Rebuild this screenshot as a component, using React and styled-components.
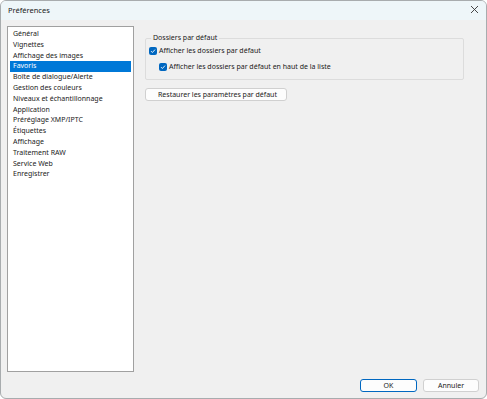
import styled, { createGlobalStyle } from "styled-components";

const GlobalStyle = createGlobalStyle`
  html, body {
    margin: 0;
    padding: 0;
    background: #ffffff;
  }
  body {
    font-family: "Noto Sans", "Open Sans", sans-serif;
    font-size: 7px;
    color: #1a1a1a;
  }
`;

const Window = styled.div`
  width: 487px;
  height: 399px;
  box-sizing: border-box;
  border: 1px solid #a8acae;
  border-radius: 6px;
  overflow: hidden;
  background: #f0f0f0;
  display: flex;
  flex-direction: column;
`;

const TitleBar = styled.div`
  height: 19px;
  flex: none;
  box-sizing: border-box;
  background: #eef6f9;
  display: flex;
  align-items: center;
  justify-content: space-between;
  padding: 0 7px 2px 7px;
`;

const Title = styled.span`
  font-size: 7.5px;
  color: #1a1a1a;
`;

const CloseButton = styled.div`
  width: 10px;
  height: 10px;
  display: flex;
  align-items: center;
  justify-content: center;
`;

const Body = styled.div`
  flex: 1;
  display: flex;
  flex-direction: column;
  padding: 6px 6px 6px 6px;
`;

const Main = styled.div`
  flex: 1;
  display: flex;
  gap: 11px;
`;

const List = styled.div`
  width: 127px;
  height: 346px;
  box-sizing: border-box;
  background: #ffffff;
  border: 1px solid #a0a0a0;
  padding: 2px 2px 0 2px;
  display: flex;
  flex-direction: column;
`;

const ListItem = styled.div`
  height: 10.8px;
  line-height: 10.8px;
  padding-left: 3px;
  white-space: nowrap;
  background: ${(p) => (p.selected ? "#0078d7" : "transparent")};
  color: ${(p) => (p.selected ? "#ffffff" : "#1a1a1a")};
`;

const Panel = styled.div`
  flex: 1;
  display: flex;
  flex-direction: column;
  align-items: flex-start;
  padding-top: 8px;
  padding-right: 16px;
`;

const Group = styled.fieldset`
  align-self: stretch;
  margin: 0;
  padding: 3px 4px 7px 3px;
  border: 1px solid #dcdcdc;
  border-radius: 2px;
  display: flex;
  flex-direction: column;
  gap: 5px;
`;

const Legend = styled.legend`
  padding: 0 2px;
  margin-left: 2px;
  font-size: 7px;
  line-height: 8px;
`;

const CheckRow = styled.label`
  display: flex;
  align-items: center;
  gap: 2px;
  padding-left: ${(p) => (p.indent ? "10px" : "0")};
  line-height: 11px;
`;

const Box = styled.span`
  width: 8px;
  height: 8px;
  border-radius: 2px;
  background: #0067c0;
  display: flex;
  align-items: center;
  justify-content: center;
  flex: none;
`;

const Button = styled.button`
  font-family: inherit;
  font-size: 7px;
  color: #1a1a1a;
  height: 13px;
  padding: 0;
  box-sizing: border-box;
  background: #fdfdfd;
  border: 1px solid ${(p) => (p.primary ? "#0067c0" : "#d0d0d0")};
  border-radius: 3px;
  width: ${(p) => p.w}px;
  line-height: 11px;
`;

const RestoreButton = styled(Button)`
  margin-top: 8px;
  text-align: left;
  padding-left: 12px;
`;

const Footer = styled.div`
  display: flex;
  justify-content: flex-end;
  gap: 6px;
  padding: 0 1px 0 0;
`;

const items = [
  "Général",
  "Vignettes",
  "Affichage des images",
  "Favoris",
  "Boîte de dialogue/Alerte",
  "Gestion des couleurs",
  "Niveaux et échantillonnage",
  "Application",
  "Préréglage XMP/IPTC",
  "Étiquettes",
  "Affichage",
  "Traitement RAW",
  "Service Web",
  "Enregistrer",
];

function Check() {
  return (
    <Box>
      <svg width="6" height="6" viewBox="0 0 6 6">
        <path d="M1 3.1 L2.4 4.5 L5 1.6" fill="none" stroke="#fff" strokeWidth="0.9" />
      </svg>
    </Box>
  );
}

export default function App() {
  return (
    <>
      <GlobalStyle />
      <Window>
        <TitleBar>
          <Title>Préférences</Title>
          <CloseButton>
            <svg width="9" height="9" viewBox="0 0 9 9">
              <path d="M1 1 L8 8 M8 1 L1 8" stroke="#333" strokeWidth="0.9" />
            </svg>
          </CloseButton>
        </TitleBar>
        <Body>
          <Main>
            <List>
              {items.map((it) => (
                <ListItem key={it} selected={it === "Favoris"}>
                  {it}
                </ListItem>
              ))}
            </List>
            <Panel>
              <Group>
                <Legend>Dossiers par défaut</Legend>
                <CheckRow>
                  <Check />
                  Afficher les dossiers par défaut
                </CheckRow>
                <CheckRow indent>
                  <Check />
                  Afficher les dossiers par défaut en haut de la liste
                </CheckRow>
              </Group>
              <RestoreButton w={142}>Restaurer les paramètres par défaut</RestoreButton>
            </Panel>
          </Main>
          <Footer>
            <Button primary w={57}>OK</Button>
            <Button w={56}>Annuler</Button>
          </Footer>
        </Body>
      </Window>
    </>
  );
}
